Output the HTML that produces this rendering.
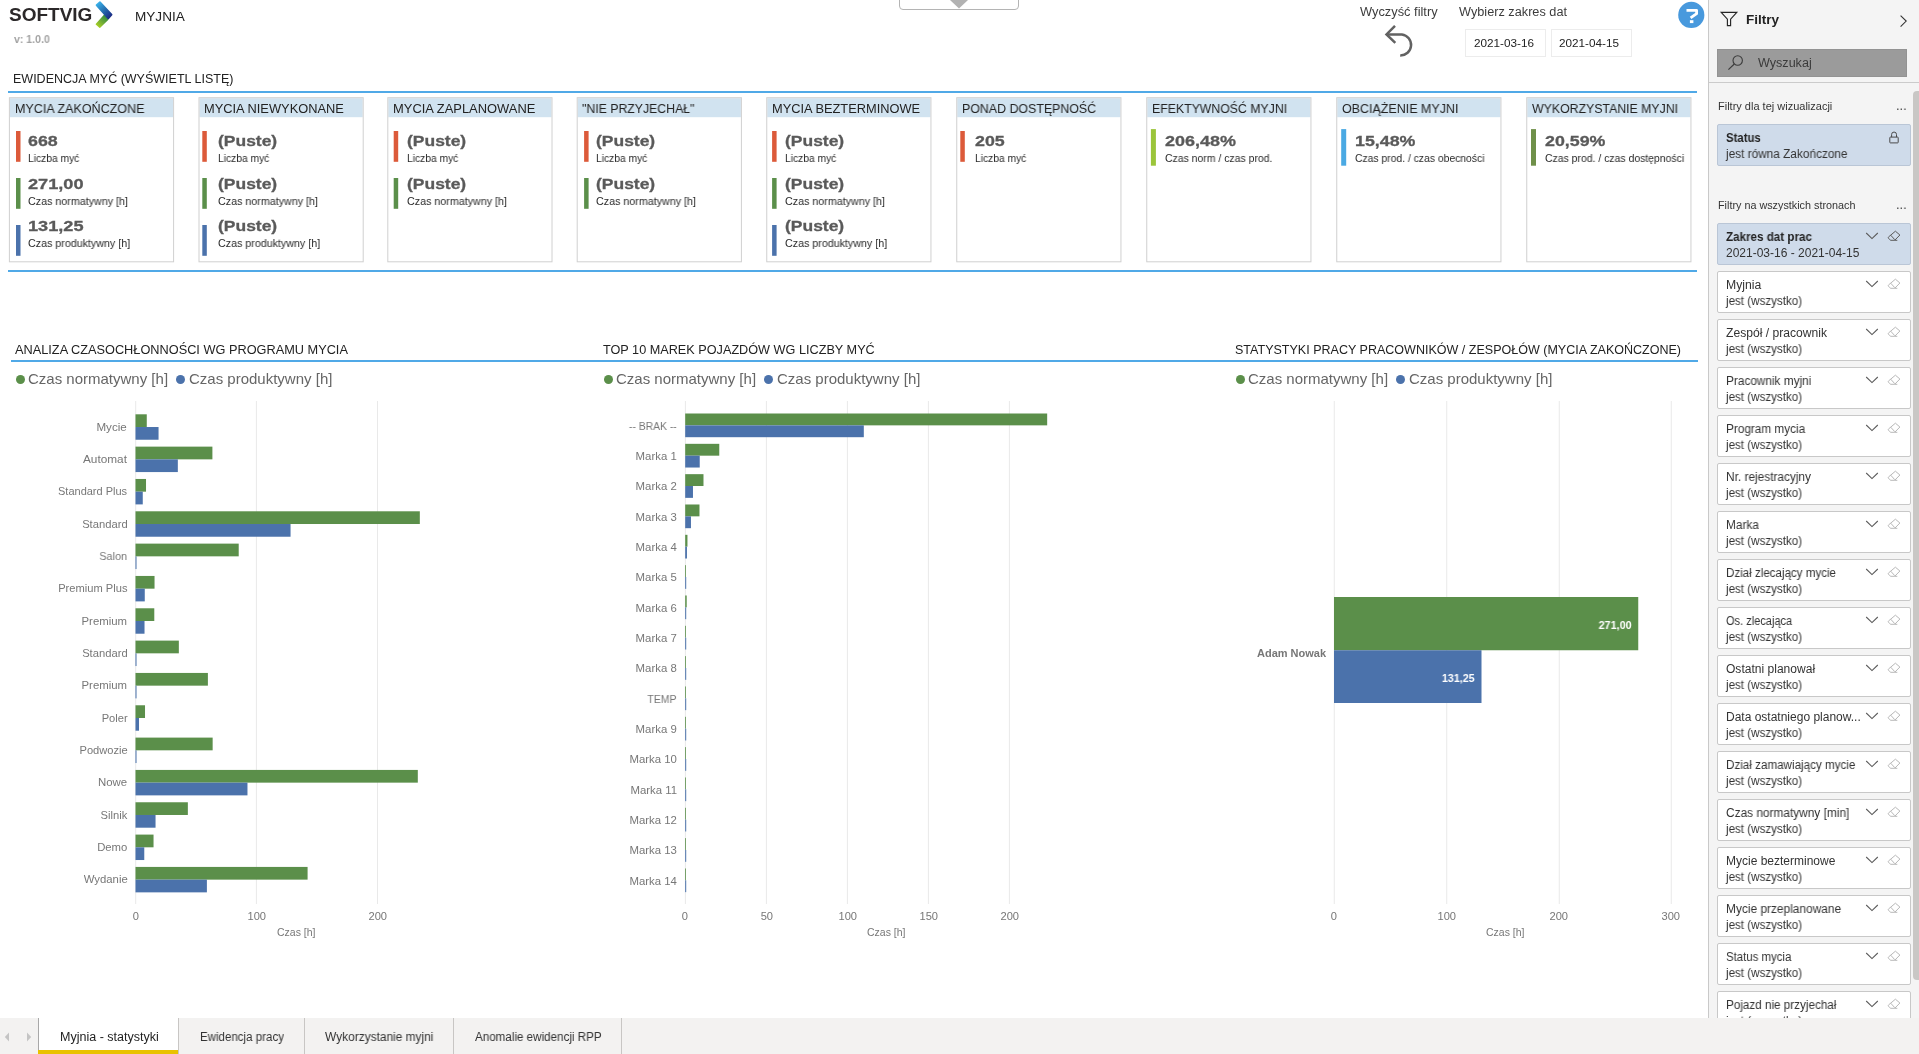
<!DOCTYPE html>
<html lang="pl"><head><meta charset="utf-8"><title>MYJNIA</title>
<style>
html,body{margin:0;padding:0;background:#fff;}
body{width:1919px;height:1054px;position:relative;overflow:hidden;font-family:"Liberation Sans",sans-serif;}
.t{position:absolute;white-space:nowrap;will-change:transform;}
.r{position:absolute;}
svg{position:absolute;overflow:visible;}
</style></head><body>

<svg style="left:0;top:0" width="1708" height="1019" viewBox="0 0 1708 1019"><rect x="9.90" y="98.2" width="163.2" height="19" fill="#d1e3f0"/><rect x="9.40" y="97.7" width="164.2" height="164.1" fill="none" stroke="#d0d0d0" stroke-width="1"/><rect x="16.00" y="131.00" width="4.5" height="30.8" fill="#dc5a3a"/><rect x="16.00" y="178.00" width="4.5" height="30.8" fill="#5b8f4a"/><rect x="16.00" y="225.00" width="4.5" height="30.8" fill="#4b72ab"/><rect x="199.50" y="98.2" width="163.2" height="19" fill="#d1e3f0"/><rect x="199.00" y="97.7" width="164.2" height="164.1" fill="none" stroke="#d0d0d0" stroke-width="1"/><rect x="202.30" y="131.00" width="4.5" height="30.8" fill="#dc5a3a"/><rect x="202.30" y="178.00" width="4.5" height="30.8" fill="#5b8f4a"/><rect x="202.30" y="225.00" width="4.5" height="30.8" fill="#4b72ab"/><rect x="388.30" y="98.2" width="163.2" height="19" fill="#d1e3f0"/><rect x="387.80" y="97.7" width="164.2" height="164.1" fill="none" stroke="#d0d0d0" stroke-width="1"/><rect x="393.70" y="131.00" width="4.5" height="30.8" fill="#dc5a3a"/><rect x="393.70" y="178.00" width="4.5" height="30.8" fill="#5b8f4a"/><rect x="577.70" y="98.2" width="163.2" height="19" fill="#d1e3f0"/><rect x="577.20" y="97.7" width="164.2" height="164.1" fill="none" stroke="#d0d0d0" stroke-width="1"/><rect x="584.10" y="131.00" width="4.5" height="30.8" fill="#dc5a3a"/><rect x="584.10" y="178.00" width="4.5" height="30.8" fill="#5b8f4a"/><rect x="767.25" y="98.2" width="163.2" height="19" fill="#d1e3f0"/><rect x="766.75" y="97.7" width="164.2" height="164.1" fill="none" stroke="#d0d0d0" stroke-width="1"/><rect x="772.10" y="131.00" width="4.5" height="30.8" fill="#dc5a3a"/><rect x="772.10" y="178.00" width="4.5" height="30.8" fill="#5b8f4a"/><rect x="772.10" y="225.00" width="4.5" height="30.8" fill="#4b72ab"/><rect x="957.25" y="98.2" width="163.2" height="19" fill="#d1e3f0"/><rect x="956.75" y="97.7" width="164.2" height="164.1" fill="none" stroke="#d0d0d0" stroke-width="1"/><rect x="960.30" y="131.00" width="4.5" height="30.8" fill="#dc5a3a"/><rect x="1147.25" y="98.2" width="163.2" height="19" fill="#d1e3f0"/><rect x="1146.75" y="97.7" width="164.2" height="164.1" fill="none" stroke="#d0d0d0" stroke-width="1"/><rect x="1150.90" y="129.1" width="5" height="36.6" fill="#9bc53a"/><rect x="1337.25" y="98.2" width="163.2" height="19" fill="#d1e3f0"/><rect x="1336.75" y="97.7" width="164.2" height="164.1" fill="none" stroke="#d0d0d0" stroke-width="1"/><rect x="1341.20" y="129.1" width="5" height="36.6" fill="#4aa9e3"/><rect x="1527.25" y="98.2" width="163.2" height="19" fill="#d1e3f0"/><rect x="1526.75" y="97.7" width="164.2" height="164.1" fill="none" stroke="#d0d0d0" stroke-width="1"/><rect x="1531.00" y="129.1" width="5" height="36.6" fill="#6f9049"/><rect x="135.20" y="401.00" width="1.00" height="503.00" fill="#e9e9e9"/><rect x="255.90" y="401.00" width="1.00" height="503.00" fill="#e9e9e9"/><rect x="377.00" y="401.00" width="1.00" height="503.00" fill="#e9e9e9"/><rect x="135.50" y="414.30" width="11.27" height="12.72" fill="#5b8f4a"/><rect x="135.50" y="427.02" width="23.05" height="12.72" fill="#4b72ab"/><rect x="135.50" y="446.63" width="76.90" height="12.72" fill="#5b8f4a"/><rect x="135.50" y="459.35" width="42.33" height="12.72" fill="#4b72ab"/><rect x="135.50" y="478.96" width="10.52" height="12.72" fill="#5b8f4a"/><rect x="135.50" y="491.68" width="7.26" height="12.72" fill="#4b72ab"/><rect x="135.50" y="511.29" width="284.32" height="12.72" fill="#5b8f4a"/><rect x="135.50" y="524.01" width="155.06" height="12.72" fill="#4b72ab"/><rect x="135.50" y="543.62" width="103.21" height="12.72" fill="#5b8f4a"/><rect x="135.50" y="556.34" width="1.00" height="12.72" fill="#4b72ab"/><rect x="135.50" y="575.95" width="19.04" height="12.72" fill="#5b8f4a"/><rect x="135.50" y="588.67" width="9.27" height="12.72" fill="#4b72ab"/><rect x="135.50" y="608.28" width="18.79" height="12.72" fill="#5b8f4a"/><rect x="135.50" y="621.00" width="9.02" height="12.72" fill="#4b72ab"/><rect x="135.50" y="640.61" width="43.34" height="12.72" fill="#5b8f4a"/><rect x="135.50" y="653.33" width="1.00" height="12.72" fill="#4b72ab"/><rect x="135.50" y="672.94" width="72.39" height="12.72" fill="#5b8f4a"/><rect x="135.50" y="685.66" width="1.00" height="12.72" fill="#4b72ab"/><rect x="135.50" y="705.27" width="9.52" height="12.72" fill="#5b8f4a"/><rect x="135.50" y="717.99" width="3.51" height="12.72" fill="#4b72ab"/><rect x="135.50" y="737.60" width="77.15" height="12.72" fill="#5b8f4a"/><rect x="135.50" y="750.32" width="1.00" height="12.72" fill="#4b72ab"/><rect x="135.50" y="769.93" width="282.31" height="12.72" fill="#5b8f4a"/><rect x="135.50" y="782.65" width="111.97" height="12.72" fill="#4b72ab"/><rect x="135.50" y="802.26" width="52.35" height="12.72" fill="#5b8f4a"/><rect x="135.50" y="814.98" width="20.04" height="12.72" fill="#4b72ab"/><rect x="135.50" y="834.59" width="18.04" height="12.72" fill="#5b8f4a"/><rect x="135.50" y="847.31" width="8.77" height="12.72" fill="#4b72ab"/><rect x="135.50" y="866.92" width="172.09" height="12.72" fill="#5b8f4a"/><rect x="135.50" y="879.64" width="71.39" height="12.72" fill="#4b72ab"/><rect x="684.90" y="401.00" width="1.00" height="503.00" fill="#e9e9e9"/><rect x="765.90" y="401.00" width="1.00" height="503.00" fill="#e9e9e9"/><rect x="846.90" y="401.00" width="1.00" height="503.00" fill="#e9e9e9"/><rect x="927.90" y="401.00" width="1.00" height="503.00" fill="#e9e9e9"/><rect x="1008.90" y="401.00" width="1.00" height="503.00" fill="#e9e9e9"/><rect x="685.20" y="413.50" width="361.97" height="11.85" fill="#5b8f4a"/><rect x="685.20" y="425.35" width="178.61" height="11.85" fill="#4b72ab"/><rect x="685.20" y="443.83" width="34.07" height="11.85" fill="#5b8f4a"/><rect x="685.20" y="455.68" width="14.53" height="11.85" fill="#4b72ab"/><rect x="685.20" y="474.16" width="18.29" height="11.85" fill="#5b8f4a"/><rect x="685.20" y="486.01" width="7.77" height="11.85" fill="#4b72ab"/><rect x="685.20" y="504.49" width="14.28" height="11.85" fill="#5b8f4a"/><rect x="685.20" y="516.34" width="5.76" height="11.85" fill="#4b72ab"/><rect x="685.20" y="534.82" width="2.25" height="11.85" fill="#5b8f4a"/><rect x="685.20" y="546.67" width="1.75" height="11.85" fill="#4b72ab"/><rect x="685.20" y="565.15" width="0.80" height="11.85" fill="#5b8f4a"/><rect x="685.20" y="577.00" width="1.00" height="11.85" fill="#4b72ab"/><rect x="685.20" y="595.48" width="1.50" height="11.85" fill="#5b8f4a"/><rect x="685.20" y="607.33" width="1.00" height="11.85" fill="#4b72ab"/><rect x="685.20" y="625.81" width="0.80" height="11.85" fill="#5b8f4a"/><rect x="685.20" y="637.66" width="1.00" height="11.85" fill="#4b72ab"/><rect x="685.20" y="656.14" width="0.80" height="11.85" fill="#5b8f4a"/><rect x="685.20" y="667.99" width="1.00" height="11.85" fill="#4b72ab"/><rect x="685.20" y="686.47" width="0.80" height="11.85" fill="#5b8f4a"/><rect x="685.20" y="698.32" width="1.00" height="11.85" fill="#4b72ab"/><rect x="685.20" y="716.80" width="0.80" height="11.85" fill="#5b8f4a"/><rect x="685.20" y="728.65" width="1.00" height="11.85" fill="#4b72ab"/><rect x="685.20" y="747.13" width="0.80" height="11.85" fill="#5b8f4a"/><rect x="685.20" y="758.98" width="1.00" height="11.85" fill="#4b72ab"/><rect x="685.20" y="777.46" width="0.80" height="11.85" fill="#5b8f4a"/><rect x="685.20" y="789.31" width="1.00" height="11.85" fill="#4b72ab"/><rect x="685.20" y="807.79" width="0.80" height="11.85" fill="#5b8f4a"/><rect x="685.20" y="819.64" width="1.00" height="11.85" fill="#4b72ab"/><rect x="685.20" y="838.12" width="0.80" height="11.85" fill="#5b8f4a"/><rect x="685.20" y="849.97" width="1.00" height="11.85" fill="#4b72ab"/><rect x="685.20" y="868.45" width="0.80" height="11.85" fill="#5b8f4a"/><rect x="685.20" y="880.30" width="1.00" height="11.85" fill="#4b72ab"/><rect x="1333.75" y="401.00" width="1.00" height="503.00" fill="#e9e9e9"/><rect x="1446.25" y="401.00" width="1.00" height="503.00" fill="#e9e9e9"/><rect x="1558.75" y="401.00" width="1.00" height="503.00" fill="#e9e9e9"/><rect x="1670.75" y="401.00" width="1.00" height="503.00" fill="#e9e9e9"/><rect x="1334.00" y="597.00" width="304.25" height="53.25" fill="#5b8f4a"/><rect x="1334.00" y="650.25" width="147.50" height="52.75" fill="#4b72ab"/></svg>
<div class="t" style="top:5.22px;font-size:19px;line-height:19px;color:#2b2829;font-weight:bold;left:9.00px;transform-origin:0 0;">SOFTVIG</div>
<svg style="left:95px;top:0px" width="19" height="30" viewBox="0 0 19 30">
<defs>
<linearGradient id="gb" gradientUnits="userSpaceOnUse" x1="2.5" y1="3" x2="15.5" y2="17"><stop offset="0" stop-color="#3ab2ea"/><stop offset="0.5" stop-color="#256fb0"/><stop offset="1" stop-color="#1b2a84"/></linearGradient>
<linearGradient id="gg" gradientUnits="userSpaceOnUse" x1="12" y1="16" x2="2.5" y2="26.5"><stop offset="0" stop-color="#2c8a3e"/><stop offset="0.5" stop-color="#6aa838"/><stop offset="1" stop-color="#a8d022"/></linearGradient>
</defs>
<polygon points="9.3,15.5 12.6,19.3 4.9,27.0 1.5,24.2" fill="url(#gg)" stroke="url(#gg)" stroke-width="1.7" stroke-linejoin="round"/>
<polygon points="4.9,2.1 16.6,14.6 13.3,18.4 1.5,5.2" fill="url(#gb)" stroke="url(#gb)" stroke-width="1.7" stroke-linejoin="round"/>
</svg>
<div class="t" style="top:9.57px;font-size:13.5px;line-height:13.5px;color:#222;left:135.00px;transform-origin:0 0;transform:scaleX(1.0049);">MYJNIA</div>
<div class="t" style="top:33.59px;font-size:11px;line-height:11px;color:#a3a3a3;font-weight:bold;left:14.00px;transform-origin:0 0;transform:scaleX(0.9584);">v: 1.0.0</div>
<div class="r" style="left:899px;top:-6px;width:120px;height:16px;border:1px solid #b4b4b4;border-radius:4px;box-sizing:border-box;background:#fff"></div>
<svg style="left:949px;top:0" width="20" height="9" viewBox="0 0 20 9"><path d="M1 0 L19 0 L10 8.4 Z" fill="#b2b2b2"/></svg>
<div class="t" style="top:5.64px;font-size:12px;line-height:12px;color:#3c3c3c;left:1360.40px;transform-origin:0 0;transform:scaleX(1.0696);">Wyczyść filtry</div>
<div class="t" style="top:5.64px;font-size:12px;line-height:12px;color:#3c3c3c;left:1458.80px;transform-origin:0 0;transform:scaleX(1.0596);">Wybierz zakres dat</div>
<svg style="left:1383px;top:23px" width="34" height="36" viewBox="0 0 34 36">
<path d="M12.0 2.9 L3.5 11.4 L12.3 19.8" fill="none" stroke="#626262" stroke-width="2.5" stroke-linecap="butt" stroke-linejoin="miter"/>
<path d="M4.2 11.4 H18.9 A10.6 10.6 0 0 1 17.2 32.5" fill="none" stroke="#626262" stroke-width="2.5" stroke-linecap="butt"/>
</svg>
<div class="r" style="left:1465px;top:29px;width:81px;height:28px;border:1px solid #ececec;box-sizing:border-box;background:#fff"></div>
<div class="r" style="left:1551px;top:29px;width:81px;height:28px;border:1px solid #ececec;box-sizing:border-box;background:#fff"></div>
<div class="t" style="top:38.37px;font-size:11.5px;line-height:11.5px;color:#222;left:1473.70px;transform-origin:0 0;transform:scaleX(1.0199);">2021-03-16</div>
<div class="t" style="top:38.37px;font-size:11.5px;line-height:11.5px;color:#222;left:1559.40px;transform-origin:0 0;transform:scaleX(1.0199);">2021-04-15</div>
<svg style="left:1678px;top:2px" width="27" height="27" viewBox="0 0 27 27">
<circle cx="13.3" cy="12.9" r="13.1" fill="#4899dd"/>
<path d="M8.5 8.4 H18.6 V11.7 L12.6 15.9" fill="none" stroke="#fff" stroke-width="2.8" stroke-linejoin="round" stroke-linecap="butt"/>
<rect x="11.9" y="18.2" width="3.5" height="2.9" fill="#fff"/>
</svg>
<div class="t" style="top:72.59px;font-size:12px;line-height:12px;color:#222;left:13.10px;transform-origin:0 0;transform:scaleX(1.0417);">EWIDENCJA MYĆ (WYŚWIETL LISTĘ)</div>
<div class="r" style="left:8.00px;top:91.00px;width:1688.50px;height:2.00px;background:#50a9e7;"></div>
<div class="r" style="left:8.00px;top:269.60px;width:1688.50px;height:2.00px;background:#50a9e7;"></div>
<div class="t" style="top:102.55px;font-size:12.7px;line-height:12.7px;color:#222;left:14.50px;transform-origin:0 0;transform:scaleX(0.9874);">MYCIA ZAKOŃCZONE</div>
<div class="t" style="top:134.07px;font-size:14.8px;line-height:14.8px;color:#5a5a5a;font-weight:bold;left:28.20px;transform-origin:0 0;transform:scaleX(1.2027);-webkit-text-stroke:0.3px #5a5a5a;">668</div>
<div class="t" style="top:152.56px;font-size:10.8px;line-height:10.8px;color:#2a2a2a;left:28.20px;transform-origin:0 0;transform:scaleX(0.9497);">Liczba myć</div>
<div class="t" style="top:177.07px;font-size:14.8px;line-height:14.8px;color:#5a5a5a;font-weight:bold;left:28.20px;transform-origin:0 0;transform:scaleX(1.2282);-webkit-text-stroke:0.3px #5a5a5a;">271,00</div>
<div class="t" style="top:195.56px;font-size:10.8px;line-height:10.8px;color:#2a2a2a;left:28.20px;transform-origin:0 0;transform:scaleX(0.9917);">Czas normatywny [h]</div>
<div class="t" style="top:219.47px;font-size:14.8px;line-height:14.8px;color:#5a5a5a;font-weight:bold;left:28.20px;transform-origin:0 0;transform:scaleX(1.2282);-webkit-text-stroke:0.3px #5a5a5a;">131,25</div>
<div class="t" style="top:237.86px;font-size:10.8px;line-height:10.8px;color:#2a2a2a;left:28.20px;transform-origin:0 0;transform:scaleX(0.9899);">Czas produktywny [h]</div>
<div class="t" style="top:102.55px;font-size:12.7px;line-height:12.7px;color:#222;left:204.10px;transform-origin:0 0;transform:scaleX(1.0122);">MYCIA NIEWYKONANE</div>
<div class="t" style="top:134.07px;font-size:14.8px;line-height:14.8px;color:#5a5a5a;font-weight:bold;left:217.50px;transform-origin:0 0;transform:scaleX(1.1802);-webkit-text-stroke:0.3px #5a5a5a;">(Puste)</div>
<div class="t" style="top:152.56px;font-size:10.8px;line-height:10.8px;color:#2a2a2a;left:217.50px;transform-origin:0 0;transform:scaleX(0.9497);">Liczba myć</div>
<div class="t" style="top:177.07px;font-size:14.8px;line-height:14.8px;color:#5a5a5a;font-weight:bold;left:217.50px;transform-origin:0 0;transform:scaleX(1.1802);-webkit-text-stroke:0.3px #5a5a5a;">(Puste)</div>
<div class="t" style="top:195.56px;font-size:10.8px;line-height:10.8px;color:#2a2a2a;left:217.50px;transform-origin:0 0;transform:scaleX(0.9917);">Czas normatywny [h]</div>
<div class="t" style="top:219.47px;font-size:14.8px;line-height:14.8px;color:#5a5a5a;font-weight:bold;left:217.50px;transform-origin:0 0;transform:scaleX(1.1802);-webkit-text-stroke:0.3px #5a5a5a;">(Puste)</div>
<div class="t" style="top:237.86px;font-size:10.8px;line-height:10.8px;color:#2a2a2a;left:217.50px;transform-origin:0 0;transform:scaleX(0.9899);">Czas produktywny [h]</div>
<div class="t" style="top:102.55px;font-size:12.7px;line-height:12.7px;color:#222;left:392.90px;transform-origin:0 0;transform:scaleX(1.0181);">MYCIA ZAPLANOWANE</div>
<div class="t" style="top:134.07px;font-size:14.8px;line-height:14.8px;color:#5a5a5a;font-weight:bold;left:406.90px;transform-origin:0 0;transform:scaleX(1.1802);-webkit-text-stroke:0.3px #5a5a5a;">(Puste)</div>
<div class="t" style="top:152.56px;font-size:10.8px;line-height:10.8px;color:#2a2a2a;left:406.90px;transform-origin:0 0;transform:scaleX(0.9497);">Liczba myć</div>
<div class="t" style="top:177.07px;font-size:14.8px;line-height:14.8px;color:#5a5a5a;font-weight:bold;left:406.90px;transform-origin:0 0;transform:scaleX(1.1802);-webkit-text-stroke:0.3px #5a5a5a;">(Puste)</div>
<div class="t" style="top:195.56px;font-size:10.8px;line-height:10.8px;color:#2a2a2a;left:406.90px;transform-origin:0 0;transform:scaleX(0.9917);">Czas normatywny [h]</div>
<div class="t" style="top:102.55px;font-size:12.7px;line-height:12.7px;color:#222;left:582.30px;transform-origin:0 0;transform:scaleX(0.9674);">&quot;NIE PRZYJECHAŁ&quot;</div>
<div class="t" style="top:134.07px;font-size:14.8px;line-height:14.8px;color:#5a5a5a;font-weight:bold;left:596.20px;transform-origin:0 0;transform:scaleX(1.1802);-webkit-text-stroke:0.3px #5a5a5a;">(Puste)</div>
<div class="t" style="top:152.56px;font-size:10.8px;line-height:10.8px;color:#2a2a2a;left:596.20px;transform-origin:0 0;transform:scaleX(0.9497);">Liczba myć</div>
<div class="t" style="top:177.07px;font-size:14.8px;line-height:14.8px;color:#5a5a5a;font-weight:bold;left:596.20px;transform-origin:0 0;transform:scaleX(1.1802);-webkit-text-stroke:0.3px #5a5a5a;">(Puste)</div>
<div class="t" style="top:195.56px;font-size:10.8px;line-height:10.8px;color:#2a2a2a;left:596.20px;transform-origin:0 0;transform:scaleX(0.9917);">Czas normatywny [h]</div>
<div class="t" style="top:102.55px;font-size:12.7px;line-height:12.7px;color:#222;left:771.85px;transform-origin:0 0;transform:scaleX(1.0101);">MYCIA BEZTERMINOWE</div>
<div class="t" style="top:134.07px;font-size:14.8px;line-height:14.8px;color:#5a5a5a;font-weight:bold;left:785.40px;transform-origin:0 0;transform:scaleX(1.1802);-webkit-text-stroke:0.3px #5a5a5a;">(Puste)</div>
<div class="t" style="top:152.56px;font-size:10.8px;line-height:10.8px;color:#2a2a2a;left:785.40px;transform-origin:0 0;transform:scaleX(0.9497);">Liczba myć</div>
<div class="t" style="top:177.07px;font-size:14.8px;line-height:14.8px;color:#5a5a5a;font-weight:bold;left:785.40px;transform-origin:0 0;transform:scaleX(1.1802);-webkit-text-stroke:0.3px #5a5a5a;">(Puste)</div>
<div class="t" style="top:195.56px;font-size:10.8px;line-height:10.8px;color:#2a2a2a;left:785.40px;transform-origin:0 0;transform:scaleX(0.9917);">Czas normatywny [h]</div>
<div class="t" style="top:219.47px;font-size:14.8px;line-height:14.8px;color:#5a5a5a;font-weight:bold;left:785.40px;transform-origin:0 0;transform:scaleX(1.1802);-webkit-text-stroke:0.3px #5a5a5a;">(Puste)</div>
<div class="t" style="top:237.86px;font-size:10.8px;line-height:10.8px;color:#2a2a2a;left:785.40px;transform-origin:0 0;transform:scaleX(0.9899);">Czas produktywny [h]</div>
<div class="t" style="top:102.55px;font-size:12.7px;line-height:12.7px;color:#222;left:961.85px;transform-origin:0 0;transform:scaleX(0.9756);">PONAD DOSTĘPNOŚĆ</div>
<div class="t" style="top:134.07px;font-size:14.8px;line-height:14.8px;color:#5a5a5a;font-weight:bold;left:975.20px;transform-origin:0 0;transform:scaleX(1.2027);-webkit-text-stroke:0.3px #5a5a5a;">205</div>
<div class="t" style="top:152.56px;font-size:10.8px;line-height:10.8px;color:#2a2a2a;left:975.20px;transform-origin:0 0;transform:scaleX(0.9497);">Liczba myć</div>
<div class="t" style="top:102.55px;font-size:12.7px;line-height:12.7px;color:#222;left:1151.85px;transform-origin:0 0;transform:scaleX(0.9681);">EFEKTYWNOŚĆ MYJNI</div>
<div class="t" style="top:133.67px;font-size:14.8px;line-height:14.8px;color:#5a5a5a;font-weight:bold;left:1165.00px;transform-origin:0 0;transform:scaleX(1.2135);-webkit-text-stroke:0.3px #5a5a5a;">206,48%</div>
<div class="t" style="top:152.56px;font-size:10.8px;line-height:10.8px;color:#2a2a2a;left:1165.00px;transform-origin:0 0;transform:scaleX(0.9672);">Czas norm / czas prod.</div>
<div class="t" style="top:102.55px;font-size:12.7px;line-height:12.7px;color:#222;left:1341.85px;transform-origin:0 0;transform:scaleX(0.9827);">OBCIĄŻENIE MYJNI</div>
<div class="t" style="top:133.67px;font-size:14.8px;line-height:14.8px;color:#5a5a5a;font-weight:bold;left:1355.40px;transform-origin:0 0;transform:scaleX(1.2033);-webkit-text-stroke:0.3px #5a5a5a;">15,48%</div>
<div class="t" style="top:152.56px;font-size:10.8px;line-height:10.8px;color:#2a2a2a;left:1355.40px;transform-origin:0 0;transform:scaleX(0.9588);">Czas prod. / czas obecności</div>
<div class="t" style="top:102.55px;font-size:12.7px;line-height:12.7px;color:#222;left:1531.85px;transform-origin:0 0;transform:scaleX(0.9700);">WYKORZYSTANIE MYJNI</div>
<div class="t" style="top:133.67px;font-size:14.8px;line-height:14.8px;color:#5a5a5a;font-weight:bold;left:1545.00px;transform-origin:0 0;transform:scaleX(1.2033);-webkit-text-stroke:0.3px #5a5a5a;">20,59%</div>
<div class="t" style="top:152.56px;font-size:10.8px;line-height:10.8px;color:#2a2a2a;left:1545.00px;transform-origin:0 0;transform:scaleX(0.9662);">Czas prod. / czas dostępności</div>
<div class="t" style="top:344.37px;font-size:12.2px;line-height:12.2px;color:#222;left:15.00px;transform-origin:0 0;transform:scaleX(1.0460);">ANALIZA CZASOCHŁONNOŚCI WG PROGRAMU MYCIA</div>
<div class="t" style="top:344.37px;font-size:12.2px;line-height:12.2px;color:#222;left:603.00px;transform-origin:0 0;transform:scaleX(1.0395);">TOP 10 MAREK POJAZDÓW WG LICZBY MYĆ</div>
<div class="t" style="top:344.37px;font-size:12.2px;line-height:12.2px;color:#222;left:1234.80px;transform-origin:0 0;transform:scaleX(1.0276);">STATYSTYKI PRACY PRACOWNIKÓW / ZESPOŁÓW (MYCIA ZAKOŃCZONE)</div>
<div class="r" style="left:10.50px;top:360.00px;width:1687.00px;height:2.00px;background:#50a9e7;"></div>
<div class="r" style="left:16.00px;top:375px;width:9px;height:9px;border-radius:5px;background:#5b8f4a"></div>
<div class="t" style="top:371.20px;font-size:15px;line-height:15px;color:#666;left:28.25px;transform-origin:0 0;">Czas normatywny [h]</div>
<div class="r" style="left:176.00px;top:375px;width:9px;height:9px;border-radius:5px;background:#4b72ab"></div>
<div class="t" style="top:371.20px;font-size:15px;line-height:15px;color:#666;left:188.75px;transform-origin:0 0;">Czas produktywny [h]</div>
<div class="r" style="left:604.10px;top:375px;width:9px;height:9px;border-radius:5px;background:#5b8f4a"></div>
<div class="t" style="top:371.20px;font-size:15px;line-height:15px;color:#666;left:616.35px;transform-origin:0 0;">Czas normatywny [h]</div>
<div class="r" style="left:764.10px;top:375px;width:9px;height:9px;border-radius:5px;background:#4b72ab"></div>
<div class="t" style="top:371.20px;font-size:15px;line-height:15px;color:#666;left:776.85px;transform-origin:0 0;">Czas produktywny [h]</div>
<div class="r" style="left:1235.80px;top:375px;width:9px;height:9px;border-radius:5px;background:#5b8f4a"></div>
<div class="t" style="top:371.20px;font-size:15px;line-height:15px;color:#666;left:1248.05px;transform-origin:0 0;">Czas normatywny [h]</div>
<div class="r" style="left:1395.80px;top:375px;width:9px;height:9px;border-radius:5px;background:#4b72ab"></div>
<div class="t" style="top:371.20px;font-size:15px;line-height:15px;color:#666;left:1408.55px;transform-origin:0 0;">Czas produktywny [h]</div>
<div class="t" style="top:421.74px;font-size:11px;line-height:11px;color:#777777;left:98.47px;transform-origin:100% 0;transform:scaleX(1.0548);">Mycie</div>
<div class="t" style="top:454.07px;font-size:11px;line-height:11px;color:#777777;left:86.23px;transform-origin:100% 0;transform:scaleX(1.0741);">Automat</div>
<div class="t" style="top:486.40px;font-size:11px;line-height:11px;color:#777777;left:58.10px;transform-origin:100% 0;">Standard Plus</div>
<div class="t" style="top:518.73px;font-size:11px;line-height:11px;color:#777777;left:82.55px;transform-origin:100% 0;transform:scaleX(1.0191);">Standard</div>
<div class="t" style="top:551.06px;font-size:11px;line-height:11px;color:#777777;left:99.06px;transform-origin:100% 0;transform:scaleX(0.9881);">Salon</div>
<div class="t" style="top:583.39px;font-size:11px;line-height:11px;color:#777777;left:58.74px;transform-origin:100% 0;transform:scaleX(1.0122);">Premium Plus</div>
<div class="t" style="top:615.72px;font-size:11px;line-height:11px;color:#777777;left:83.19px;transform-origin:100% 0;transform:scaleX(1.0339);">Premium</div>
<div class="t" style="top:648.05px;font-size:11px;line-height:11px;color:#777777;left:82.55px;transform-origin:100% 0;transform:scaleX(1.0191);">Standard</div>
<div class="t" style="top:680.38px;font-size:11px;line-height:11px;color:#777777;left:83.19px;transform-origin:100% 0;transform:scaleX(1.0339);">Premium</div>
<div class="t" style="top:712.71px;font-size:11px;line-height:11px;color:#777777;left:101.52px;transform-origin:100% 0;transform:scaleX(1.0124);">Poler</div>
<div class="t" style="top:745.04px;font-size:11px;line-height:11px;color:#777777;left:79.50px;transform-origin:100% 0;transform:scaleX(1.0105);">Podwozie</div>
<div class="t" style="top:777.37px;font-size:11px;line-height:11px;color:#777777;left:99.08px;transform-origin:100% 0;transform:scaleX(1.0383);">Nowe</div>
<div class="t" style="top:809.70px;font-size:11px;line-height:11px;color:#777777;left:100.91px;transform-origin:100% 0;transform:scaleX(1.0157);">Silnik</div>
<div class="t" style="top:842.03px;font-size:11px;line-height:11px;color:#777777;left:97.86px;transform-origin:100% 0;transform:scaleX(1.0292);">Demo</div>
<div class="t" style="top:874.36px;font-size:11px;line-height:11px;color:#777777;left:84.50px;transform-origin:100% 0;transform:scaleX(1.0304);">Wydanie</div>
<div class="t" style="top:911.11px;font-size:10.5px;line-height:10.5px;color:#777777;left:132.78px;transform-origin:50% 0;transform:scaleX(1.0600);">0</div>
<div class="t" style="top:911.11px;font-size:10.5px;line-height:10.5px;color:#777777;left:247.64px;transform-origin:50% 0;transform:scaleX(1.0600);">100</div>
<div class="t" style="top:911.11px;font-size:10.5px;line-height:10.5px;color:#777777;left:368.74px;transform-origin:50% 0;transform:scaleX(1.0600);">200</div>
<div class="t" style="top:927.41px;font-size:10.5px;line-height:10.5px;color:#777777;left:277.24px;transform-origin:50% 0;">Czas [h]</div>
<div class="t" style="top:420.79px;font-size:11px;line-height:11px;color:#777777;left:626.28px;transform-origin:100% 0;transform:scaleX(0.9424);">-- BRAK --</div>
<div class="t" style="top:451.12px;font-size:11px;line-height:11px;color:#777777;left:637.26px;transform-origin:100% 0;transform:scaleX(1.0350);">Marka 1</div>
<div class="t" style="top:481.45px;font-size:11px;line-height:11px;color:#777777;left:637.26px;transform-origin:100% 0;transform:scaleX(1.0350);">Marka 2</div>
<div class="t" style="top:511.78px;font-size:11px;line-height:11px;color:#777777;left:637.26px;transform-origin:100% 0;transform:scaleX(1.0350);">Marka 3</div>
<div class="t" style="top:542.11px;font-size:11px;line-height:11px;color:#777777;left:637.26px;transform-origin:100% 0;transform:scaleX(1.0350);">Marka 4</div>
<div class="t" style="top:572.44px;font-size:11px;line-height:11px;color:#777777;left:637.26px;transform-origin:100% 0;transform:scaleX(1.0350);">Marka 5</div>
<div class="t" style="top:602.77px;font-size:11px;line-height:11px;color:#777777;left:637.26px;transform-origin:100% 0;transform:scaleX(1.0350);">Marka 6</div>
<div class="t" style="top:633.10px;font-size:11px;line-height:11px;color:#777777;left:637.26px;transform-origin:100% 0;transform:scaleX(1.0350);">Marka 7</div>
<div class="t" style="top:663.43px;font-size:11px;line-height:11px;color:#777777;left:637.26px;transform-origin:100% 0;transform:scaleX(1.0350);">Marka 8</div>
<div class="t" style="top:693.76px;font-size:11px;line-height:11px;color:#777777;left:646.44px;transform-origin:100% 0;transform:scaleX(0.9556);">TEMP</div>
<div class="t" style="top:724.09px;font-size:11px;line-height:11px;color:#777777;left:637.26px;transform-origin:100% 0;transform:scaleX(1.0350);">Marka 9</div>
<div class="t" style="top:754.42px;font-size:11px;line-height:11px;color:#777777;left:631.15px;transform-origin:100% 0;transform:scaleX(1.0350);">Marka 10</div>
<div class="t" style="top:784.75px;font-size:11px;line-height:11px;color:#777777;left:631.96px;transform-origin:100% 0;transform:scaleX(1.0350);">Marka 11</div>
<div class="t" style="top:815.08px;font-size:11px;line-height:11px;color:#777777;left:631.15px;transform-origin:100% 0;transform:scaleX(1.0350);">Marka 12</div>
<div class="t" style="top:845.41px;font-size:11px;line-height:11px;color:#777777;left:631.15px;transform-origin:100% 0;transform:scaleX(1.0350);">Marka 13</div>
<div class="t" style="top:875.74px;font-size:11px;line-height:11px;color:#777777;left:631.15px;transform-origin:100% 0;transform:scaleX(1.0350);">Marka 14</div>
<div class="t" style="top:911.11px;font-size:10.5px;line-height:10.5px;color:#777777;left:682.48px;transform-origin:50% 0;transform:scaleX(1.0600);">0</div>
<div class="t" style="top:911.11px;font-size:10.5px;line-height:10.5px;color:#777777;left:760.56px;transform-origin:50% 0;transform:scaleX(1.0600);">50</div>
<div class="t" style="top:911.11px;font-size:10.5px;line-height:10.5px;color:#777777;left:838.64px;transform-origin:50% 0;transform:scaleX(1.0600);">100</div>
<div class="t" style="top:911.11px;font-size:10.5px;line-height:10.5px;color:#777777;left:919.64px;transform-origin:50% 0;transform:scaleX(1.0600);">150</div>
<div class="t" style="top:911.11px;font-size:10.5px;line-height:10.5px;color:#777777;left:1000.64px;transform-origin:50% 0;transform:scaleX(1.0600);">200</div>
<div class="t" style="top:927.41px;font-size:10.5px;line-height:10.5px;color:#777777;left:867.24px;transform-origin:50% 0;">Czas [h]</div>
<div class="t" style="top:647.99px;font-size:11px;line-height:11px;color:#777;font-weight:bold;left:1256.93px;transform-origin:100% 0;">Adam Nowak</div>
<div class="t" style="top:619.94px;font-size:11px;line-height:11px;color:#fff;font-weight:bold;left:1597.60px;transform-origin:100% 0;transform:scaleX(0.9808);">271,00</div>
<div class="t" style="top:673.09px;font-size:11px;line-height:11px;color:#fff;font-weight:bold;left:1440.60px;transform-origin:100% 0;transform:scaleX(0.9734);">131,25</div>
<div class="t" style="top:911.11px;font-size:10.5px;line-height:10.5px;color:#777777;left:1331.33px;transform-origin:50% 0;transform:scaleX(1.0600);">0</div>
<div class="t" style="top:911.11px;font-size:10.5px;line-height:10.5px;color:#777777;left:1437.99px;transform-origin:50% 0;transform:scaleX(1.0600);">100</div>
<div class="t" style="top:911.11px;font-size:10.5px;line-height:10.5px;color:#777777;left:1550.49px;transform-origin:50% 0;transform:scaleX(1.0600);">200</div>
<div class="t" style="top:911.11px;font-size:10.5px;line-height:10.5px;color:#777777;left:1662.49px;transform-origin:50% 0;transform:scaleX(1.0600);">300</div>
<div class="t" style="top:927.41px;font-size:10.5px;line-height:10.5px;color:#777777;left:1486.24px;transform-origin:50% 0;">Czas [h]</div>
<div class="r" style="left:1708.00px;top:0.00px;width:211.00px;height:1018.00px;background:#f4f4f4;border-left:1px solid #c9c9c9;box-sizing:border-box;"></div>
<svg style="left:1720px;top:11px" width="18" height="16" viewBox="0 0 18 16">
<path d="M1.2 1.4 L16.8 1.4 L10.6 8.2 L10.6 14.6 L7.4 14.6 L7.4 8.2 Z" fill="none" stroke="#252525" stroke-width="1.15" stroke-linejoin="miter"/></svg>
<div class="t" style="top:12.83px;font-size:13.2px;line-height:13.2px;color:#222;font-weight:bold;left:1745.60px;transform-origin:0 0;transform:scaleX(1.0257);">Filtry</div>
<svg style="left:1899px;top:14px" width="9" height="14" viewBox="0 0 9 14"><path d="M1.6 1.6 L7.2 7.1 L1.6 12.6" fill="none" stroke="#333" stroke-width="1.1"/></svg>
<div class="r" style="left:1717.00px;top:49.00px;width:189.50px;height:28.00px;background:#9b9b9b;box-sizing:border-box;border:1px solid #939393;"></div>
<svg style="left:1727px;top:54px" width="18" height="18" viewBox="0 0 18 18">
<circle cx="10.7" cy="6.5" r="4.7" fill="none" stroke="#3c3c3c" stroke-width="1.1"/><path d="M7.3 10 L1.4 15.6" stroke="#3c3c3c" stroke-width="1.2" fill="none"/></svg>
<div class="t" style="top:56.64px;font-size:12px;line-height:12px;color:#3a3a3a;left:1757.60px;transform-origin:0 0;transform:scaleX(1.0481);">Wyszukaj</div>
<div class="r" style="left:1709.00px;top:82.00px;width:210.00px;height:1.00px;background:#cbcbcb;"></div>
<div class="r" style="left:1913.20px;top:91.00px;width:6.00px;height:889.00px;background:#c9c7c5;border-radius:4px 0 0 4px;"></div>
<div class="t" style="top:100.96px;font-size:10.8px;line-height:10.8px;color:#333;left:1717.50px;transform-origin:0 0;transform:scaleX(1.0184);">Filtry dla tej wizualizacji</div>
<div class="t" style="top:99.20px;font-size:13px;line-height:13px;color:#444;left:1895.70px;transform-origin:0 0;transform:scaleX(0.9783);">...</div>
<div class="t" style="top:199.66px;font-size:10.8px;line-height:10.8px;color:#333;left:1717.50px;transform-origin:0 0;">Filtry na wszystkich stronach</div>
<div class="t" style="top:197.90px;font-size:13px;line-height:13px;color:#444;left:1895.70px;transform-origin:0 0;transform:scaleX(0.9783);">...</div>
<div class="r" style="left:1717px;top:124px;width:194px;height:42px;box-sizing:border-box;border:1px solid #bac6d6;border-radius:2px;background:#cfdbea"></div>
<div class="t" style="top:131.84px;font-size:12px;line-height:12px;color:#222;font-weight:bold;left:1726.00px;transform-origin:0 0;transform:scaleX(0.9461);">Status</div>
<div class="t" style="top:147.64px;font-size:12px;line-height:12px;color:#333;left:1726.00px;transform-origin:0 0;transform:scaleX(0.9846);">jest równa Zakończone</div>
<svg style="left:1888px;top:130.5px" width="12" height="13" viewBox="0 0 12 13">
<rect x="1.8" y="6.1" width="8.4" height="5.8" rx="0.6" fill="none" stroke="#4a4a4a" stroke-width="1"/>
<path d="M3.6 6.1 V3.5 A2.45 2.45 0 0 1 8.5 3.5 V6.1" fill="none" stroke="#4a4a4a" stroke-width="1"/></svg>
<div class="r" style="left:1717px;top:223px;width:194px;height:42px;box-sizing:border-box;border:1px solid #bac6d6;border-radius:2px;background:#cfdbea"></div>
<div class="t" style="top:230.84px;font-size:12px;line-height:12px;color:#222;font-weight:bold;left:1726.00px;transform-origin:0 0;transform:scaleX(0.9694);">Zakres dat prac</div>
<div class="t" style="top:246.64px;font-size:12px;line-height:12px;color:#333;left:1726.00px;transform-origin:0 0;">2021-03-16 - 2021-04-15</div>
<svg style="left:1865px;top:232.2px" width="14" height="8" viewBox="0 0 14 8"><path d="M1.2 1 L7 6.6 L12.8 1" fill="none" stroke="#5a5a5a" stroke-width="1.05"/></svg>
<svg style="left:1887px;top:230.3px" width="14" height="12" viewBox="0 0 14 12">
<path d="M8.4 1.2 L12.9 5.0 L7.7 10.3 L4.0 10.3 Q3.3 10.3 2.8 9.7 L1.5 8.2 Q1.0 7.5 1.6 6.9 Z" fill="none" stroke="#5a5a5a" stroke-width="1" stroke-linejoin="round"/>
<path d="M3.7 5.2 L7.8 9.7" fill="none" stroke="#5a5a5a" stroke-width="1"/>
<path d="M7.7 10.3 H10.3" fill="none" stroke="#5a5a5a" stroke-width="1"/></svg>
<div class="r" style="left:1717px;top:271px;width:194px;height:42px;box-sizing:border-box;border:1px solid #c8c8c8;border-radius:2px;background:#ffffff"></div>
<div class="t" style="top:278.84px;font-size:12px;line-height:12px;color:#333;left:1726.00px;transform-origin:0 0;transform:scaleX(1.0180);">Myjnia</div>
<div class="t" style="top:294.64px;font-size:12px;line-height:12px;color:#333;left:1726.00px;transform-origin:0 0;transform:scaleX(0.9660);">jest (wszystko)</div>
<svg style="left:1865px;top:280.2px" width="14" height="8" viewBox="0 0 14 8"><path d="M1.2 1 L7 6.6 L12.8 1" fill="none" stroke="#5a5a5a" stroke-width="1.05"/></svg>
<svg style="left:1887px;top:278.3px" width="14" height="12" viewBox="0 0 14 12">
<path d="M8.4 1.2 L12.9 5.0 L7.7 10.3 L4.0 10.3 Q3.3 10.3 2.8 9.7 L1.5 8.2 Q1.0 7.5 1.6 6.9 Z" fill="none" stroke="#b8b8b8" stroke-width="1" stroke-linejoin="round"/>
<path d="M3.7 5.2 L7.8 9.7" fill="none" stroke="#b8b8b8" stroke-width="1"/>
<path d="M7.7 10.3 H10.3" fill="none" stroke="#b8b8b8" stroke-width="1"/></svg>
<div class="r" style="left:1717px;top:319px;width:194px;height:42px;box-sizing:border-box;border:1px solid #c8c8c8;border-radius:2px;background:#ffffff"></div>
<div class="t" style="top:326.84px;font-size:12px;line-height:12px;color:#333;left:1726.00px;transform-origin:0 0;transform:scaleX(1.0095);">Zespół / pracownik</div>
<div class="t" style="top:342.64px;font-size:12px;line-height:12px;color:#333;left:1726.00px;transform-origin:0 0;transform:scaleX(0.9660);">jest (wszystko)</div>
<svg style="left:1865px;top:328.2px" width="14" height="8" viewBox="0 0 14 8"><path d="M1.2 1 L7 6.6 L12.8 1" fill="none" stroke="#5a5a5a" stroke-width="1.05"/></svg>
<svg style="left:1887px;top:326.3px" width="14" height="12" viewBox="0 0 14 12">
<path d="M8.4 1.2 L12.9 5.0 L7.7 10.3 L4.0 10.3 Q3.3 10.3 2.8 9.7 L1.5 8.2 Q1.0 7.5 1.6 6.9 Z" fill="none" stroke="#b8b8b8" stroke-width="1" stroke-linejoin="round"/>
<path d="M3.7 5.2 L7.8 9.7" fill="none" stroke="#b8b8b8" stroke-width="1"/>
<path d="M7.7 10.3 H10.3" fill="none" stroke="#b8b8b8" stroke-width="1"/></svg>
<div class="r" style="left:1717px;top:367px;width:194px;height:42px;box-sizing:border-box;border:1px solid #c8c8c8;border-radius:2px;background:#ffffff"></div>
<div class="t" style="top:374.84px;font-size:12px;line-height:12px;color:#333;left:1726.00px;transform-origin:0 0;transform:scaleX(0.9839);">Pracownik myjni</div>
<div class="t" style="top:390.64px;font-size:12px;line-height:12px;color:#333;left:1726.00px;transform-origin:0 0;transform:scaleX(0.9660);">jest (wszystko)</div>
<svg style="left:1865px;top:376.2px" width="14" height="8" viewBox="0 0 14 8"><path d="M1.2 1 L7 6.6 L12.8 1" fill="none" stroke="#5a5a5a" stroke-width="1.05"/></svg>
<svg style="left:1887px;top:374.3px" width="14" height="12" viewBox="0 0 14 12">
<path d="M8.4 1.2 L12.9 5.0 L7.7 10.3 L4.0 10.3 Q3.3 10.3 2.8 9.7 L1.5 8.2 Q1.0 7.5 1.6 6.9 Z" fill="none" stroke="#b8b8b8" stroke-width="1" stroke-linejoin="round"/>
<path d="M3.7 5.2 L7.8 9.7" fill="none" stroke="#b8b8b8" stroke-width="1"/>
<path d="M7.7 10.3 H10.3" fill="none" stroke="#b8b8b8" stroke-width="1"/></svg>
<div class="r" style="left:1717px;top:415px;width:194px;height:42px;box-sizing:border-box;border:1px solid #c8c8c8;border-radius:2px;background:#ffffff"></div>
<div class="t" style="top:422.84px;font-size:12px;line-height:12px;color:#333;left:1726.00px;transform-origin:0 0;transform:scaleX(0.9816);">Program mycia</div>
<div class="t" style="top:438.64px;font-size:12px;line-height:12px;color:#333;left:1726.00px;transform-origin:0 0;transform:scaleX(0.9660);">jest (wszystko)</div>
<svg style="left:1865px;top:424.2px" width="14" height="8" viewBox="0 0 14 8"><path d="M1.2 1 L7 6.6 L12.8 1" fill="none" stroke="#5a5a5a" stroke-width="1.05"/></svg>
<svg style="left:1887px;top:422.3px" width="14" height="12" viewBox="0 0 14 12">
<path d="M8.4 1.2 L12.9 5.0 L7.7 10.3 L4.0 10.3 Q3.3 10.3 2.8 9.7 L1.5 8.2 Q1.0 7.5 1.6 6.9 Z" fill="none" stroke="#b8b8b8" stroke-width="1" stroke-linejoin="round"/>
<path d="M3.7 5.2 L7.8 9.7" fill="none" stroke="#b8b8b8" stroke-width="1"/>
<path d="M7.7 10.3 H10.3" fill="none" stroke="#b8b8b8" stroke-width="1"/></svg>
<div class="r" style="left:1717px;top:463px;width:194px;height:42px;box-sizing:border-box;border:1px solid #c8c8c8;border-radius:2px;background:#ffffff"></div>
<div class="t" style="top:470.84px;font-size:12px;line-height:12px;color:#333;left:1726.00px;transform-origin:0 0;transform:scaleX(0.9881);">Nr. rejestracyjny</div>
<div class="t" style="top:486.64px;font-size:12px;line-height:12px;color:#333;left:1726.00px;transform-origin:0 0;transform:scaleX(0.9660);">jest (wszystko)</div>
<svg style="left:1865px;top:472.2px" width="14" height="8" viewBox="0 0 14 8"><path d="M1.2 1 L7 6.6 L12.8 1" fill="none" stroke="#5a5a5a" stroke-width="1.05"/></svg>
<svg style="left:1887px;top:470.3px" width="14" height="12" viewBox="0 0 14 12">
<path d="M8.4 1.2 L12.9 5.0 L7.7 10.3 L4.0 10.3 Q3.3 10.3 2.8 9.7 L1.5 8.2 Q1.0 7.5 1.6 6.9 Z" fill="none" stroke="#b8b8b8" stroke-width="1" stroke-linejoin="round"/>
<path d="M3.7 5.2 L7.8 9.7" fill="none" stroke="#b8b8b8" stroke-width="1"/>
<path d="M7.7 10.3 H10.3" fill="none" stroke="#b8b8b8" stroke-width="1"/></svg>
<div class="r" style="left:1717px;top:511px;width:194px;height:42px;box-sizing:border-box;border:1px solid #c8c8c8;border-radius:2px;background:#ffffff"></div>
<div class="t" style="top:518.84px;font-size:12px;line-height:12px;color:#333;left:1726.00px;transform-origin:0 0;transform:scaleX(0.9838);">Marka</div>
<div class="t" style="top:534.64px;font-size:12px;line-height:12px;color:#333;left:1726.00px;transform-origin:0 0;transform:scaleX(0.9660);">jest (wszystko)</div>
<svg style="left:1865px;top:520.2px" width="14" height="8" viewBox="0 0 14 8"><path d="M1.2 1 L7 6.6 L12.8 1" fill="none" stroke="#5a5a5a" stroke-width="1.05"/></svg>
<svg style="left:1887px;top:518.3px" width="14" height="12" viewBox="0 0 14 12">
<path d="M8.4 1.2 L12.9 5.0 L7.7 10.3 L4.0 10.3 Q3.3 10.3 2.8 9.7 L1.5 8.2 Q1.0 7.5 1.6 6.9 Z" fill="none" stroke="#b8b8b8" stroke-width="1" stroke-linejoin="round"/>
<path d="M3.7 5.2 L7.8 9.7" fill="none" stroke="#b8b8b8" stroke-width="1"/>
<path d="M7.7 10.3 H10.3" fill="none" stroke="#b8b8b8" stroke-width="1"/></svg>
<div class="r" style="left:1717px;top:559px;width:194px;height:42px;box-sizing:border-box;border:1px solid #c8c8c8;border-radius:2px;background:#ffffff"></div>
<div class="t" style="top:566.84px;font-size:12px;line-height:12px;color:#333;left:1726.00px;transform-origin:0 0;transform:scaleX(0.9646);">Dział zlecający mycie</div>
<div class="t" style="top:582.64px;font-size:12px;line-height:12px;color:#333;left:1726.00px;transform-origin:0 0;transform:scaleX(0.9660);">jest (wszystko)</div>
<svg style="left:1865px;top:568.2px" width="14" height="8" viewBox="0 0 14 8"><path d="M1.2 1 L7 6.6 L12.8 1" fill="none" stroke="#5a5a5a" stroke-width="1.05"/></svg>
<svg style="left:1887px;top:566.3px" width="14" height="12" viewBox="0 0 14 12">
<path d="M8.4 1.2 L12.9 5.0 L7.7 10.3 L4.0 10.3 Q3.3 10.3 2.8 9.7 L1.5 8.2 Q1.0 7.5 1.6 6.9 Z" fill="none" stroke="#b8b8b8" stroke-width="1" stroke-linejoin="round"/>
<path d="M3.7 5.2 L7.8 9.7" fill="none" stroke="#b8b8b8" stroke-width="1"/>
<path d="M7.7 10.3 H10.3" fill="none" stroke="#b8b8b8" stroke-width="1"/></svg>
<div class="r" style="left:1717px;top:607px;width:194px;height:42px;box-sizing:border-box;border:1px solid #c8c8c8;border-radius:2px;background:#ffffff"></div>
<div class="t" style="top:614.84px;font-size:12px;line-height:12px;color:#333;left:1726.00px;transform-origin:0 0;transform:scaleX(0.9191);">Os. zlecająca</div>
<div class="t" style="top:630.64px;font-size:12px;line-height:12px;color:#333;left:1726.00px;transform-origin:0 0;transform:scaleX(0.9660);">jest (wszystko)</div>
<svg style="left:1865px;top:616.2px" width="14" height="8" viewBox="0 0 14 8"><path d="M1.2 1 L7 6.6 L12.8 1" fill="none" stroke="#5a5a5a" stroke-width="1.05"/></svg>
<svg style="left:1887px;top:614.3px" width="14" height="12" viewBox="0 0 14 12">
<path d="M8.4 1.2 L12.9 5.0 L7.7 10.3 L4.0 10.3 Q3.3 10.3 2.8 9.7 L1.5 8.2 Q1.0 7.5 1.6 6.9 Z" fill="none" stroke="#b8b8b8" stroke-width="1" stroke-linejoin="round"/>
<path d="M3.7 5.2 L7.8 9.7" fill="none" stroke="#b8b8b8" stroke-width="1"/>
<path d="M7.7 10.3 H10.3" fill="none" stroke="#b8b8b8" stroke-width="1"/></svg>
<div class="r" style="left:1717px;top:655px;width:194px;height:42px;box-sizing:border-box;border:1px solid #c8c8c8;border-radius:2px;background:#ffffff"></div>
<div class="t" style="top:662.84px;font-size:12px;line-height:12px;color:#333;left:1726.00px;transform-origin:0 0;transform:scaleX(1.0043);">Ostatni planował</div>
<div class="t" style="top:678.64px;font-size:12px;line-height:12px;color:#333;left:1726.00px;transform-origin:0 0;transform:scaleX(0.9660);">jest (wszystko)</div>
<svg style="left:1865px;top:664.2px" width="14" height="8" viewBox="0 0 14 8"><path d="M1.2 1 L7 6.6 L12.8 1" fill="none" stroke="#5a5a5a" stroke-width="1.05"/></svg>
<svg style="left:1887px;top:662.3px" width="14" height="12" viewBox="0 0 14 12">
<path d="M8.4 1.2 L12.9 5.0 L7.7 10.3 L4.0 10.3 Q3.3 10.3 2.8 9.7 L1.5 8.2 Q1.0 7.5 1.6 6.9 Z" fill="none" stroke="#b8b8b8" stroke-width="1" stroke-linejoin="round"/>
<path d="M3.7 5.2 L7.8 9.7" fill="none" stroke="#b8b8b8" stroke-width="1"/>
<path d="M7.7 10.3 H10.3" fill="none" stroke="#b8b8b8" stroke-width="1"/></svg>
<div class="r" style="left:1717px;top:703px;width:194px;height:42px;box-sizing:border-box;border:1px solid #c8c8c8;border-radius:2px;background:#ffffff"></div>
<div class="t" style="top:710.84px;font-size:12px;line-height:12px;color:#333;left:1726.00px;transform-origin:0 0;">Data ostatniego planow...</div>
<div class="t" style="top:726.64px;font-size:12px;line-height:12px;color:#333;left:1726.00px;transform-origin:0 0;transform:scaleX(0.9660);">jest (wszystko)</div>
<svg style="left:1865px;top:712.2px" width="14" height="8" viewBox="0 0 14 8"><path d="M1.2 1 L7 6.6 L12.8 1" fill="none" stroke="#5a5a5a" stroke-width="1.05"/></svg>
<svg style="left:1887px;top:710.3px" width="14" height="12" viewBox="0 0 14 12">
<path d="M8.4 1.2 L12.9 5.0 L7.7 10.3 L4.0 10.3 Q3.3 10.3 2.8 9.7 L1.5 8.2 Q1.0 7.5 1.6 6.9 Z" fill="none" stroke="#b8b8b8" stroke-width="1" stroke-linejoin="round"/>
<path d="M3.7 5.2 L7.8 9.7" fill="none" stroke="#b8b8b8" stroke-width="1"/>
<path d="M7.7 10.3 H10.3" fill="none" stroke="#b8b8b8" stroke-width="1"/></svg>
<div class="r" style="left:1717px;top:751px;width:194px;height:42px;box-sizing:border-box;border:1px solid #c8c8c8;border-radius:2px;background:#ffffff"></div>
<div class="t" style="top:758.84px;font-size:12px;line-height:12px;color:#333;left:1726.00px;transform-origin:0 0;transform:scaleX(0.9702);">Dział zamawiający mycie</div>
<div class="t" style="top:774.64px;font-size:12px;line-height:12px;color:#333;left:1726.00px;transform-origin:0 0;transform:scaleX(0.9660);">jest (wszystko)</div>
<svg style="left:1865px;top:760.2px" width="14" height="8" viewBox="0 0 14 8"><path d="M1.2 1 L7 6.6 L12.8 1" fill="none" stroke="#5a5a5a" stroke-width="1.05"/></svg>
<svg style="left:1887px;top:758.3px" width="14" height="12" viewBox="0 0 14 12">
<path d="M8.4 1.2 L12.9 5.0 L7.7 10.3 L4.0 10.3 Q3.3 10.3 2.8 9.7 L1.5 8.2 Q1.0 7.5 1.6 6.9 Z" fill="none" stroke="#b8b8b8" stroke-width="1" stroke-linejoin="round"/>
<path d="M3.7 5.2 L7.8 9.7" fill="none" stroke="#b8b8b8" stroke-width="1"/>
<path d="M7.7 10.3 H10.3" fill="none" stroke="#b8b8b8" stroke-width="1"/></svg>
<div class="r" style="left:1717px;top:799px;width:194px;height:42px;box-sizing:border-box;border:1px solid #c8c8c8;border-radius:2px;background:#ffffff"></div>
<div class="t" style="top:806.84px;font-size:12px;line-height:12px;color:#333;left:1726.00px;transform-origin:0 0;transform:scaleX(0.9888);">Czas normatywny [min]</div>
<div class="t" style="top:822.64px;font-size:12px;line-height:12px;color:#333;left:1726.00px;transform-origin:0 0;transform:scaleX(0.9660);">jest (wszystko)</div>
<svg style="left:1865px;top:808.2px" width="14" height="8" viewBox="0 0 14 8"><path d="M1.2 1 L7 6.6 L12.8 1" fill="none" stroke="#5a5a5a" stroke-width="1.05"/></svg>
<svg style="left:1887px;top:806.3px" width="14" height="12" viewBox="0 0 14 12">
<path d="M8.4 1.2 L12.9 5.0 L7.7 10.3 L4.0 10.3 Q3.3 10.3 2.8 9.7 L1.5 8.2 Q1.0 7.5 1.6 6.9 Z" fill="none" stroke="#b8b8b8" stroke-width="1" stroke-linejoin="round"/>
<path d="M3.7 5.2 L7.8 9.7" fill="none" stroke="#b8b8b8" stroke-width="1"/>
<path d="M7.7 10.3 H10.3" fill="none" stroke="#b8b8b8" stroke-width="1"/></svg>
<div class="r" style="left:1717px;top:847px;width:194px;height:42px;box-sizing:border-box;border:1px solid #c8c8c8;border-radius:2px;background:#ffffff"></div>
<div class="t" style="top:854.84px;font-size:12px;line-height:12px;color:#333;left:1726.00px;transform-origin:0 0;">Mycie bezterminowe</div>
<div class="t" style="top:870.64px;font-size:12px;line-height:12px;color:#333;left:1726.00px;transform-origin:0 0;transform:scaleX(0.9660);">jest (wszystko)</div>
<svg style="left:1865px;top:856.2px" width="14" height="8" viewBox="0 0 14 8"><path d="M1.2 1 L7 6.6 L12.8 1" fill="none" stroke="#5a5a5a" stroke-width="1.05"/></svg>
<svg style="left:1887px;top:854.3px" width="14" height="12" viewBox="0 0 14 12">
<path d="M8.4 1.2 L12.9 5.0 L7.7 10.3 L4.0 10.3 Q3.3 10.3 2.8 9.7 L1.5 8.2 Q1.0 7.5 1.6 6.9 Z" fill="none" stroke="#b8b8b8" stroke-width="1" stroke-linejoin="round"/>
<path d="M3.7 5.2 L7.8 9.7" fill="none" stroke="#b8b8b8" stroke-width="1"/>
<path d="M7.7 10.3 H10.3" fill="none" stroke="#b8b8b8" stroke-width="1"/></svg>
<div class="r" style="left:1717px;top:895px;width:194px;height:42px;box-sizing:border-box;border:1px solid #c8c8c8;border-radius:2px;background:#ffffff"></div>
<div class="t" style="top:902.84px;font-size:12px;line-height:12px;color:#333;left:1726.00px;transform-origin:0 0;transform:scaleX(0.9917);">Mycie przeplanowane</div>
<div class="t" style="top:918.64px;font-size:12px;line-height:12px;color:#333;left:1726.00px;transform-origin:0 0;transform:scaleX(0.9660);">jest (wszystko)</div>
<svg style="left:1865px;top:904.2px" width="14" height="8" viewBox="0 0 14 8"><path d="M1.2 1 L7 6.6 L12.8 1" fill="none" stroke="#5a5a5a" stroke-width="1.05"/></svg>
<svg style="left:1887px;top:902.3px" width="14" height="12" viewBox="0 0 14 12">
<path d="M8.4 1.2 L12.9 5.0 L7.7 10.3 L4.0 10.3 Q3.3 10.3 2.8 9.7 L1.5 8.2 Q1.0 7.5 1.6 6.9 Z" fill="none" stroke="#b8b8b8" stroke-width="1" stroke-linejoin="round"/>
<path d="M3.7 5.2 L7.8 9.7" fill="none" stroke="#b8b8b8" stroke-width="1"/>
<path d="M7.7 10.3 H10.3" fill="none" stroke="#b8b8b8" stroke-width="1"/></svg>
<div class="r" style="left:1717px;top:943px;width:194px;height:42px;box-sizing:border-box;border:1px solid #c8c8c8;border-radius:2px;background:#ffffff"></div>
<div class="t" style="top:950.84px;font-size:12px;line-height:12px;color:#333;left:1726.00px;transform-origin:0 0;transform:scaleX(0.9521);">Status mycia</div>
<div class="t" style="top:966.64px;font-size:12px;line-height:12px;color:#333;left:1726.00px;transform-origin:0 0;transform:scaleX(0.9660);">jest (wszystko)</div>
<svg style="left:1865px;top:952.2px" width="14" height="8" viewBox="0 0 14 8"><path d="M1.2 1 L7 6.6 L12.8 1" fill="none" stroke="#5a5a5a" stroke-width="1.05"/></svg>
<svg style="left:1887px;top:950.3px" width="14" height="12" viewBox="0 0 14 12">
<path d="M8.4 1.2 L12.9 5.0 L7.7 10.3 L4.0 10.3 Q3.3 10.3 2.8 9.7 L1.5 8.2 Q1.0 7.5 1.6 6.9 Z" fill="none" stroke="#b8b8b8" stroke-width="1" stroke-linejoin="round"/>
<path d="M3.7 5.2 L7.8 9.7" fill="none" stroke="#b8b8b8" stroke-width="1"/>
<path d="M7.7 10.3 H10.3" fill="none" stroke="#b8b8b8" stroke-width="1"/></svg>
<div class="r" style="left:1717px;top:991px;width:194px;height:42px;box-sizing:border-box;border:1px solid #c8c8c8;border-radius:2px;background:#ffffff"></div>
<div class="t" style="top:998.84px;font-size:12px;line-height:12px;color:#333;left:1726.00px;transform-origin:0 0;transform:scaleX(0.9735);">Pojazd nie przyjechał</div>
<div class="t" style="top:1014.64px;font-size:12px;line-height:12px;color:#333;left:1726.00px;transform-origin:0 0;transform:scaleX(0.9660);">jest (wszystko)</div>
<svg style="left:1865px;top:1000.2px" width="14" height="8" viewBox="0 0 14 8"><path d="M1.2 1 L7 6.6 L12.8 1" fill="none" stroke="#5a5a5a" stroke-width="1.05"/></svg>
<svg style="left:1887px;top:998.3px" width="14" height="12" viewBox="0 0 14 12">
<path d="M8.4 1.2 L12.9 5.0 L7.7 10.3 L4.0 10.3 Q3.3 10.3 2.8 9.7 L1.5 8.2 Q1.0 7.5 1.6 6.9 Z" fill="none" stroke="#b8b8b8" stroke-width="1" stroke-linejoin="round"/>
<path d="M3.7 5.2 L7.8 9.7" fill="none" stroke="#b8b8b8" stroke-width="1"/>
<path d="M7.7 10.3 H10.3" fill="none" stroke="#b8b8b8" stroke-width="1"/></svg>
<div class="r" style="left:0.00px;top:1018.00px;width:1919.00px;height:36.00px;background:#f3f2f1;"></div>
<div class="r" style="left:38.00px;top:1018.00px;width:140.00px;height:36.00px;background:#ffffff;border-left:1px solid #a8a8a8;box-sizing:border-box;"></div>
<div class="r" style="left:38.00px;top:1050.00px;width:140.00px;height:4.00px;background:#e9c200;"></div>
<div class="r" style="left:178.00px;top:1018.00px;width:1.00px;height:36.00px;background:#c8c6c4;"></div>
<div class="r" style="left:304.00px;top:1018.00px;width:1.00px;height:36.00px;background:#c8c6c4;"></div>
<div class="r" style="left:453.00px;top:1018.00px;width:1.00px;height:36.00px;background:#c8c6c4;"></div>
<div class="r" style="left:621.00px;top:1018.00px;width:1.00px;height:36.00px;background:#c8c6c4;"></div>
<div class="t" style="top:1031.04px;font-size:12px;line-height:12px;color:#222;left:59.50px;transform-origin:0 0;transform:scaleX(1.0435);">Myjnia - statystyki</div>
<div class="t" style="top:1031.04px;font-size:12px;line-height:12px;color:#333;left:199.90px;transform-origin:0 0;transform:scaleX(0.9602);">Ewidencja pracy</div>
<div class="t" style="top:1031.04px;font-size:12px;line-height:12px;color:#333;left:325.00px;transform-origin:0 0;transform:scaleX(0.9922);">Wykorzystanie myjni</div>
<div class="t" style="top:1031.04px;font-size:12px;line-height:12px;color:#333;left:474.60px;transform-origin:0 0;transform:scaleX(0.9684);">Anomalie ewidencji RPP</div>
<svg style="left:4px;top:1032px" width="6" height="10" viewBox="0 0 6 10"><path d="M5 0.5 L0.8 5 L5 9.5 Z" fill="#c4c4c4"/></svg>
<svg style="left:26px;top:1032px" width="6" height="10" viewBox="0 0 6 10"><path d="M1 0.5 L5.2 5 L1 9.5 Z" fill="#c4c4c4"/></svg>
</body></html>
